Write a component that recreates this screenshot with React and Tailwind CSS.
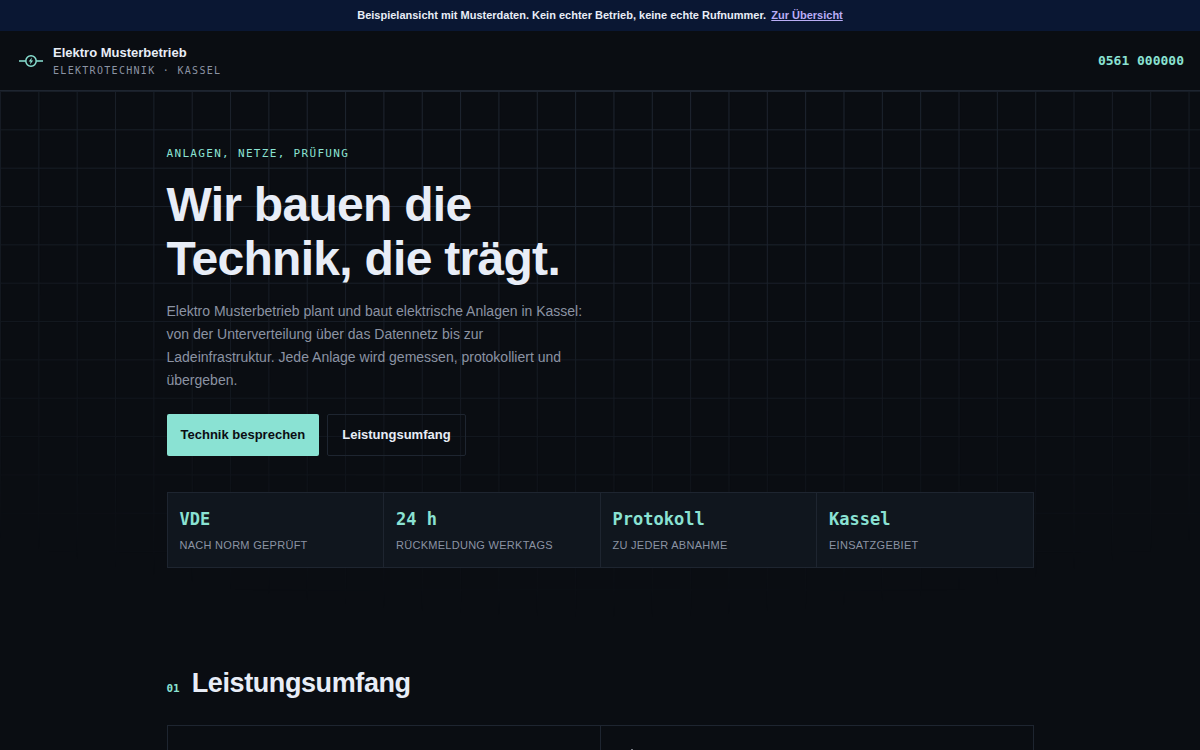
import React from 'react';

const stats = [
  { value: 'VDE', label: 'Nach Norm geprüft' },
  { value: '24 h', label: 'Rückmeldung werktags' },
  { value: 'Protokoll', label: 'Zu jeder Abnahme' },
  { value: 'Kassel', label: 'Einsatzgebiet' },
];

const Logo = () => (
  <svg width="24" height="24" viewBox="0 0 24 24" fill="none" aria-hidden="true">
    <path d="M0 12h6.5M17.5 12H24" stroke="#8ae2d3" strokeWidth="1.7" />
    <circle cx="12" cy="12" r="5.2" stroke="#8ae2d3" strokeWidth="1.5" />
    <path d="M12.9 8.6 9.7 12.6h1.9l-.6 2.9 3.2-4h-1.9z" fill="#8ae2d3" />
  </svg>
);

// Faint engineering grid, fading out towards the bottom corners
const GridBackdrop = () => (
  <svg
    className="absolute inset-0 h-full w-full [mask-image:radial-gradient(ellipse_95%_100%_at_50%_0%,#000_25%,transparent_100%)]"
    aria-hidden="true"
  >
    <defs>
      <pattern id="grid" width="38.34" height="38.34" patternUnits="userSpaceOnUse">
        <path d="M0 .5H38.34M.5 0V38.34" stroke="#1e2530" strokeWidth="1" />
      </pattern>
    </defs>
    <rect width="100%" height="100%" fill="url(#grid)" />
  </svg>
);

const Header = () => (
  <header className="flex items-center justify-between border-b border-[#1e2530] px-4 pt-3 pb-[11px] sm:pl-[19px]">
    <a href="#start" className="flex items-center gap-[10px]">
      <Logo />
      <span className="flex flex-col">
        <span className="text-[13px] leading-5 font-bold text-[#e8edf7]">Elektro Musterbetrieb</span>
        <span className="font-['DejaVu_Sans_Mono',monospace] text-[10px] leading-4 tracking-[0.13em] text-[#8b93a3] uppercase">
          Elektrotechnik · Kassel
        </span>
      </span>
    </a>
    <a href="tel:0561000000" className="font-['DejaVu_Sans_Mono',monospace] text-[13px] font-bold text-[#8ae2d3]">
      0561 000000
    </a>
  </header>
);

const Hero = () => (
  <section id="start" className="relative px-4 pt-[55px] pb-[50px]">
    <GridBackdrop />
    <div className="relative mx-auto max-w-[867px]">
      <p className="font-['DejaVu_Sans_Mono',monospace] text-[11px] leading-4 tracking-[0.12em] text-[#8ae2d3] uppercase">
        Anlagen, Netze, Prüfung
      </p>
      <h1 className="mt-4 max-w-[440px] text-5xl leading-[54px] font-bold tracking-[-0.015em] text-[#e8edf7]">
        Wir bauen die Technik, die trägt.
      </h1>
      <p className="mt-[14px] max-w-[424px] text-[14px] leading-[23px] text-[#8b93a3]">
        Elektro Musterbetrieb plant und baut elektrische Anlagen in Kassel: von der Unterverteilung über das Datennetz
        bis zur Ladeinfrastruktur. Jede Anlage wird gemessen, protokolliert und übergeben.
      </p>
      <div className="mt-[22px] flex flex-wrap gap-2">
        <a href="#kontakt" className="flex h-[42px] items-center rounded-xs bg-[#8ae2d3] px-[14px] text-[13px] font-bold text-[#0a0d12]">
          Technik besprechen
        </a>
        <a href="#leistungen" className="flex h-[42px] items-center rounded-xs border border-[#1e2530] px-[14px] text-[13px] font-bold text-[#e8edf7]">
          Leistungsumfang
        </a>
      </div>
      <dl className="mt-9 grid grid-cols-2 gap-px bg-[#1e2530] p-px md:grid-cols-4">
        {stats.map((stat) => (
          <div key={stat.value} className="flex flex-col-reverse bg-[#10161e] p-3">
            <dt className="mt-[2px] text-[11px] leading-5 tracking-wide text-[#8b93a3] uppercase">{stat.label}</dt>
            <dd className="font-['DejaVu_Sans_Mono',monospace] text-[17px] leading-7 font-bold text-[#8ae2d3]">{stat.value}</dd>
          </div>
        ))}
      </dl>
    </div>
  </section>
);

const Services = () => (
  <section id="leistungen" className="px-4 pt-[47px]">
    <div className="mx-auto max-w-[867px]">
      <div className="flex items-baseline gap-3">
        <span className="font-['DejaVu_Sans_Mono',monospace] text-[11px] font-bold text-[#8ae2d3]">01</span>
        <h2 className="text-[27px] leading-9 font-bold tracking-[-0.015em] text-[#e8edf7]">Leistungsumfang</h2>
      </div>
      <div className="mt-6 grid min-h-40 grid-cols-2 gap-px bg-[#1e2530] p-px">
        <div className="bg-[#0a0d12] p-6" />
        <div className="bg-[#0a0d12] px-[30px] py-[23px]">
          <svg width="2" height="12" viewBox="0 0 2 12" aria-hidden="true">
            <path d="M1 0v12" stroke="#e8edf7" strokeWidth="1" />
          </svg>
        </div>
      </div>
    </div>
  </section>
);

export default function App() {
  return (
    <div className="min-h-screen bg-[#0a0d12] font-['Liberation_Sans',Arial,sans-serif]">
      <div className="bg-[#0a1733] px-4 py-[7px] text-center text-[11px] leading-[17px] font-bold text-[#e8edf7]">
        Beispielansicht mit Musterdaten. Kein echter Betrieb, keine echte Rufnummer.{' '}
        <a href="#uebersicht" className="ml-[2px] text-[#b9adf5] underline">Zur Übersicht</a>
      </div>
      <Header />
      <main>
        <Hero />
        <Services />
      </main>
    </div>
  );
}
